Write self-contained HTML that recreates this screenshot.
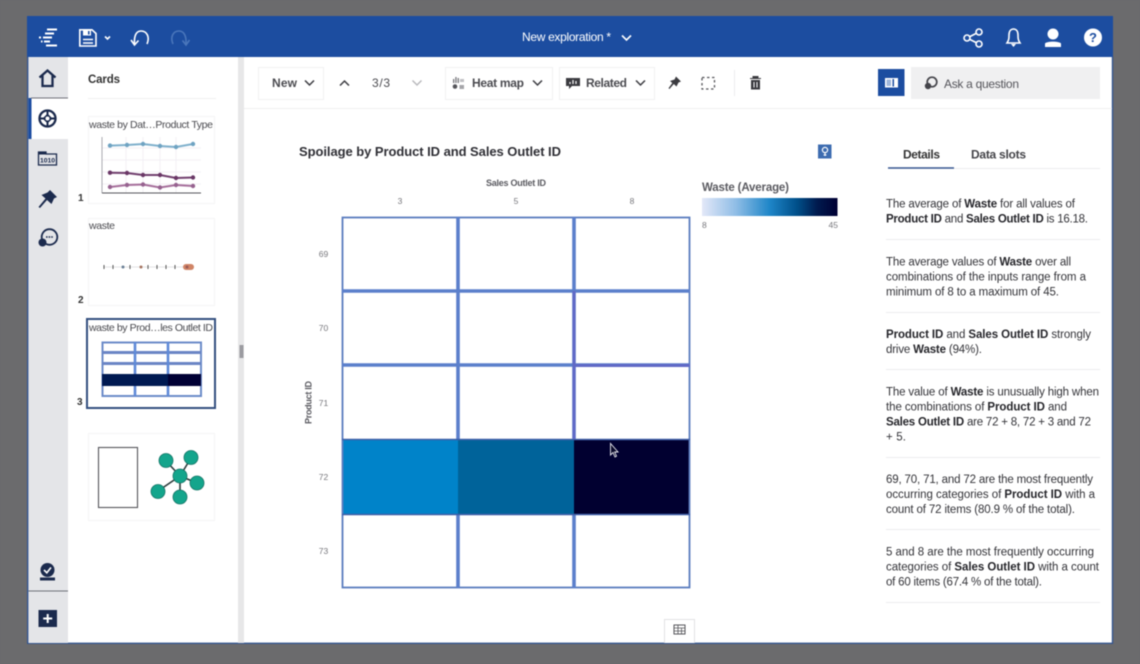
<!DOCTYPE html>
<html><head><meta charset="utf-8"><style>
html,body{margin:0;padding:0;background:#6b6b6d;width:1140px;height:664px;overflow:hidden}
svg{display:block;filter:blur(.4px)}
text{font-family:"Liberation Sans",sans-serif;fill:#2b2b30}
.d{font-size:11.5px;fill:#333338}
.d tspan{font-weight:bold;fill:#26262b}
.b{font-weight:bold}
.ax{font-size:8.5px;fill:#77777c}
.c{font-size:10.5px;fill:#4a4a4f}
.n{font-size:10px;font-weight:bold;fill:#333}
.tb{font-size:12px;font-weight:bold;fill:#4b4b50}
.sep{stroke:#ececee;stroke-width:1}
.ic{fill:none;stroke:#1b2a4d;stroke-width:2.3}
.w{fill:none;stroke:#fff;stroke-width:1.6}
.hl{stroke:#5b7fcb;fill:none}
</style></head><body>
<svg width="1140" height="664" viewBox="0 0 1140 664" xmlns="http://www.w3.org/2000/svg">
<rect width="1140" height="664" fill="#6b6b6d"/>
<rect x="27" y="16" width="1086" height="628" fill="#fff"/>
<rect x="27" y="16" width="1086" height="41" fill="#1c4da0"/>
<path d="M27.700 57V643.300H1112.500V57" fill="none" stroke="#34558f" stroke-width="1.400"/>

<!-- top bar -->
<g class="w">
<path d="M47 29.500H57M45 33.500H54M43 37.500H52M39 37.500H41M44 41.500H50M41 41.500H42.500M46 45.500H57" stroke-width="1.900"/>
<path d="M79.800 29.800H92L96 33.500V46H79.800Z"/><path d="M83 43H93M83 39.500H93"/>
<path d="M105 36.500L107.500 39L110 36.500"/>
<path d="M147 44C150 37 147 31 141 31C136 31 134 36 134.500 44"/><path d="M131 40L134.500 45L138.500 40.500"/>
<g stroke="#4a76bb"><path d="M173 44C170 37 173 31 179 31C184 31 186.500 36 186 44"/><path d="M182.500 40.500L186 45L189.500 40"/></g>
<path d="M622 35.500L626.500 40L631 35.500"/>
</g>
<rect x="83" y="30" width="8" height="5.500" fill="#fff"/><rect x="88" y="31" width="1.600" height="3.500" fill="#1c4da0"/>
<text x="522" y="41" font-size="12" style="fill:#fff" textLength="89">New exploration *</text>
<g class="w">
<circle cx="967" cy="38" r="3"/><circle cx="979" cy="32" r="3"/><circle cx="979" cy="44" r="3"/><path d="M970 36.500L976 33.500M970 39.500L976 42.500"/>
<path d="M1007 43C1009 40 1009 38 1009 35C1009 31 1011 29 1013.500 29C1016 29 1018 31 1018 35C1018 38 1018 40 1020 43Z"/>
</g>
<path d="M1011 44H1016L1013.500 47Z" fill="#fff"/>
<circle cx="1053" cy="34" r="5.500" fill="#fff"/><path d="M1045 47V43.500C1047 41 1059 41 1061 43.500V47Z" fill="#fff"/>
<circle cx="1093" cy="37.500" r="9" fill="#fff"/>
<text x="1093" y="42" text-anchor="middle" font-size="13" class="b" style="fill:#1c4da0">?</text>

<!-- left rail -->
<rect x="28.500" y="57" width="39.500" height="586" fill="#e4e5e8"/>
<rect x="28.500" y="98" width="39.500" height="41" fill="#fff"/>
<rect x="28.500" y="98" width="3" height="41" fill="#1c4da0"/>
<path d="M31 98H68" stroke="#6e7078" stroke-width="1"/>
<path d="M28.500 591H68" stroke="#6e7078" stroke-width="1"/>
<path d="M39.500 77.500L47.500 70.500L55.500 77.500M42.500 75.500V86H52.500V75.500" class="ic"/>
<circle cx="47.500" cy="118.500" r="8" class="ic"/><path d="M47.500 110V115M47.500 122V127M39 118.500H44M51 118.500H56" stroke="#1b2a4d" stroke-width="2"/>
<path d="M47.500 113.500L52.500 118.500L47.500 123.500L42.500 118.500Z" fill="#1b2a4d"/>
<circle cx="47.500" cy="118.500" r="2" fill="#fff"/>
<path d="M38.500 152H46V154H56.500V165H38.500Z" fill="none" stroke="#1b2a4d" stroke-width="1.300"/>
<rect x="38" y="151.500" width="8" height="3" fill="#1b2a4d"/>
<text x="47.500" y="162.500" text-anchor="middle" font-size="6.800" class="b" style="fill:#1b2a4d">1010</text>
<path d="M50 190L57 197L54 198.500L51.500 204L47 200L40 208L38.500 207L45.500 198.500L41.500 195L47.500 192.500Z" fill="#1b2a4d"/>
<circle cx="49.500" cy="237" r="7.800" fill="#e4e5e8" stroke="#1b2a4d" stroke-width="1.800"/>
<circle cx="42.500" cy="242.500" r="4" fill="#1b2a4d"/>
<path d="M46 237H53" stroke="#1b2a4d" stroke-width="1.600" stroke-dasharray="1.600 1"/>
<circle cx="47.500" cy="570" r="7" fill="#1b2a4d"/><path d="M44 570L46.800 572.800L51 567.500" fill="none" stroke="#fff" stroke-width="1.600"/>
<rect x="40" y="577.500" width="15" height="3" fill="#1b2a4d"/>
<rect x="38.500" y="610" width="18.500" height="17" fill="#1b2a4d"/>
<path d="M47.700 614V623M43.200 618.500H52.200" stroke="#fff" stroke-width="2"/>

<!-- cards pane -->
<rect x="238" y="57" width="6" height="586" fill="#e7e7e8"/>
<rect x="239.500" y="345" width="4" height="13" fill="#9b9ba0"/>
<text x="88" y="83" font-size="11.500" class="b" style="fill:#333" textLength="32">Cards</text>
<path d="M88 98.500H216" stroke="#efeff0"/>

<rect x="88.500" y="116.500" width="126" height="87" fill="#fff" stroke="#f4f4f5"/>
<text x="89" y="128" class="c" textLength="124">waste by Dat…Product Type</text>
<path d="M102 148H201M102 160H201M102 172H201M102 184H201M126 137V193M143 137V193M160 137V193M176 137V193" stroke="#f3f0f5" stroke-width="1"/>
<path d="M102 137V193" stroke="#aaaab0" stroke-width="1"/><path d="M102 193H201" stroke="#55555a" stroke-width="1"/>
<g fill="none" stroke-width="2">
<path d="M110 145.600L127 145L143 144L160 146L176 147L193 144" stroke="#7fb0cc"/>
<path d="M110 172.700L127 173L143 175L160 175L176 178L193 177.500" stroke="#713f6e"/>
<path d="M110 187L127 185L143 184.500L160 187.500L176 185L193 186" stroke="#a66f9b"/>
</g>
<g fill="#6fa3c2"><circle cx="110" cy="145.600" r="2.200"/><circle cx="127" cy="145" r="2.200"/><circle cx="143" cy="144" r="2.200"/><circle cx="160" cy="146" r="2.200"/><circle cx="176" cy="147" r="2.200"/><circle cx="193" cy="144" r="2.200"/></g>
<g fill="#6a3766"><circle cx="110" cy="172.700" r="2.200"/><circle cx="127" cy="173" r="2.200"/><circle cx="143" cy="175" r="2.200"/><circle cx="160" cy="175" r="2.200"/><circle cx="176" cy="178" r="2.200"/><circle cx="193" cy="177.500" r="2.200"/></g>
<g fill="#96628f"><circle cx="110" cy="187" r="2.200"/><circle cx="127" cy="185" r="2.200"/><circle cx="143" cy="184.500" r="2.200"/><circle cx="160" cy="187.500" r="2.200"/><circle cx="176" cy="185" r="2.200"/><circle cx="193" cy="186" r="2.200"/></g>
<text x="78" y="201" class="n">1</text>

<rect x="88.500" y="218.500" width="126" height="87" fill="#fff" stroke="#f4f4f5"/>
<text x="89" y="229" class="c" textLength="26">waste</text>
<path d="M104 267H190" stroke="#c9c9cc" stroke-width=".6"/>
<path d="M104 265V269M113 265V269M130 265V269M148 265V269M157 265V269M166 265V269M175 265V269" stroke="#555" stroke-width="1"/>
<circle cx="123" cy="267" r="1.500" fill="#6a7f95"/><circle cx="141" cy="267" r="1.500" fill="#a5735f"/>
<rect x="183" y="264" width="11" height="6" rx="3" fill="#d08466"/><circle cx="187" cy="267" r="1.500" fill="#9a5b55"/>
<text x="78" y="303" class="n">2</text>

<rect x="87" y="319" width="128" height="89" fill="#fff" stroke="#34507f" stroke-width="2"/>
<text x="89" y="331" class="c" textLength="124">waste by Prod…les Outlet ID</text>
<rect x="102.500" y="342.500" width="98.500" height="53.500" fill="#fff" stroke="#6c8bc8" stroke-width="2"/>
<path d="M102 352.500H201M102 363.500H201" stroke="#6a85c5" stroke-width="3"/>
<rect x="102" y="374" width="99" height="12" fill="#001a52"/><rect x="168" y="374" width="33" height="12" fill="#000034"/>
<path d="M135 342V374M168 342V374M135 386V396M168 386V396" stroke="#5f8ad8" stroke-width="2.600"/>
<text x="77" y="405" class="n">3</text>

<rect x="88.500" y="433.500" width="126" height="87" fill="#fff" stroke="#f4f4f5"/>
<rect x="98.500" y="447.500" width="39" height="60" fill="#fff" stroke="#55555a" stroke-width="1.100"/>
<path d="M180 476L166 461M180 476L191 458M180 476L197 483M180 476L180 497M180 476L158 491" stroke="#2b3b3b" stroke-width="1.600"/>
<g fill="#14a58c" stroke="#147566" stroke-width=".8"><circle cx="180" cy="476" r="7"/><circle cx="166" cy="460.500" r="7"/><circle cx="191" cy="457.500" r="7"/><circle cx="197" cy="483" r="7"/><circle cx="180" cy="497" r="7"/><circle cx="158" cy="491.500" r="7"/></g>

<!-- toolbar -->
<path d="M244 108.500H1112" stroke="#efeff0"/>
<rect x="258.500" y="67.500" width="65" height="32" fill="#fff" stroke="#f1f1f2"/>
<rect x="445.500" y="67.500" width="107" height="32" fill="#fff" stroke="#f1f1f2"/>
<rect x="559.500" y="67.500" width="95" height="32" fill="#fff" stroke="#f1f1f2"/>
<text x="272" y="87" class="tb" textLength="25">New</text>
<text x="372" y="87" font-size="12" style="fill:#4b4b50" textLength="18">3/3</text>
<text x="472" y="87" class="tb" textLength="52">Heat map</text>
<text x="586" y="87" class="tb" textLength="41">Related</text>
<g fill="none" stroke="#3b3b40" stroke-width="1.500">
<path d="M305 80.500L309.500 85L314 80.500"/><path d="M340 85.500L344.500 81L349 85.500"/>
<path d="M533 80.500L537.500 85L542 80.500"/><path d="M636 80.500L640.500 85L645 80.500"/>
<path d="M412.500 80.500L417 85L421.500 80.500" stroke="#b9b9bd"/>
</g>
<g fill="#77777c"><rect x="453" y="79" width="1.300" height="4"/><rect x="455.300" y="77" width="1.300" height="6"/><rect x="457.600" y="78" width="1.300" height="5"/><circle cx="455" cy="86.500" r="2.300" fill="#55555a"/><rect x="459.500" y="85" width="4.500" height="4" fill="#a5a5a9"/><rect x="460" y="79" width="4" height="3" fill="#c0c0c4"/></g>
<path d="M566 78H580V86H572L569 89V86H566Z" fill="#3b3b40"/><path d="M570 84V82M573 84V80M576 84V81" stroke="#fff" stroke-width="1.200"/>
<path d="M676 76.500L681 81.500L678.500 82.500L676.500 86.500L673.800 84L669.500 89L668.500 88.300L672.300 83L670 81L674.500 79.500Z" fill="#3b3b40"/>
<rect x="702" y="77.500" width="12.500" height="11.500" fill="none" stroke="#55555a" stroke-width="1.300" stroke-dasharray="2.500 2.500"/>
<path d="M734.500 70V96" stroke="#ececee"/>
<path d="M750 78.500H761M753 78.500V76.500H758V78.500M751.500 80.500H759.500V89H751.500Z" fill="#3b3b40" stroke="#3b3b40" stroke-width="1"/>
<path d="M754 82V87.500M757 82V87.500" stroke="#fff" stroke-width="1"/>

<rect x="878" y="69" width="26.500" height="27" fill="#1c4da0"/>
<rect x="885" y="78" width="13" height="9.500" fill="#fff"/><rect x="892.500" y="79" width="1.500" height="7.500" fill="#1c4da0"/><rect x="886.500" y="79.500" width="4.500" height="6.500" fill="#9fb6db"/>
<rect x="911" y="67" width="189" height="32" fill="#f0f0f1"/>
<circle cx="932" cy="82" r="4.800" fill="none" stroke="#44444a" stroke-width="1.700"/><circle cx="928" cy="86" r="3.200" fill="#44444a"/>
<text x="944" y="88" font-size="12" style="fill:#55555b" textLength="75">Ask a question</text>

<!-- chart -->
<text x="299" y="156" font-size="13" class="b" style="fill:#2f2f35" textLength="262">Spoilage by Product ID and Sales Outlet ID</text>
<rect x="818" y="144.500" width="13.500" height="14" fill="#3d6cb0"/>
<circle cx="825" cy="150" r="2.600" fill="none" stroke="#fff" stroke-width="1.200"/><path d="M825 153V156M823.500 155H826.500" stroke="#fff" stroke-width="1"/>
<text x="486" y="186" font-size="9" class="b" style="fill:#5a5a60" textLength="60">Sales Outlet ID</text>
<text x="400" y="204" class="ax" text-anchor="middle">3</text>
<text x="516" y="204" class="ax" text-anchor="middle">5</text>
<text x="632" y="204" class="ax" text-anchor="middle">8</text>
<text x="702" y="191" font-size="11.500" class="b" style="fill:#5a5a60" textLength="87">Waste (Average)</text>
<defs><linearGradient id="g" x1="0" x2="1" y1="0" y2="0">
<stop offset="0" stop-color="#e3e8f8"/><stop offset=".25" stop-color="#8fbde6"/><stop offset=".5" stop-color="#1e86c8"/><stop offset=".7" stop-color="#00508a"/><stop offset=".85" stop-color="#001a4e"/><stop offset="1" stop-color="#000033"/>
</linearGradient></defs>
<rect x="702" y="198" width="135.500" height="18" fill="url(#g)"/>
<text x="702" y="228" class="ax">8</text>
<text x="838" y="228" class="ax" text-anchor="end">45</text>
<text x="323.500" y="257" class="ax" text-anchor="middle">69</text>
<text x="323.500" y="331" class="ax" text-anchor="middle">70</text>
<text x="323.500" y="406" class="ax" text-anchor="middle">71</text>
<text x="323.500" y="480" class="ax" text-anchor="middle">72</text>
<text x="323.500" y="554" class="ax" text-anchor="middle">73</text>
<text transform="translate(311.500,424) rotate(-90)" font-size="9" class="b" style="fill:#5a5a60" textLength="43">Product ID</text>

<rect x="342" y="439" width="116" height="75" fill="#0083c9"/>
<rect x="458" y="439" width="116" height="75" fill="#00639a"/>
<rect x="574" y="439" width="116" height="75" fill="#010030"/>
<rect x="342.500" y="217.500" width="347" height="370" fill="none" stroke="#5a7cbf" stroke-width="1.800"/>
<path d="M458 217V439M574 217V439M458 514V588M574 514V588" class="hl" stroke-width="3.600"/>
<path d="M342 291H690M342 365H690" class="hl" stroke-width="3.400"/>
<path d="M342 439.500H690" stroke="#3f5fa8" stroke-width="1.500"/>
<path d="M342 514.500H690" stroke="#3f5fa8" stroke-width="1.500"/>
<path d="M574 365.500H690M574 291V439" stroke="#6069c6" stroke-width="3" fill="none"/>
<path d="M610.500 443.500V455L613 452.500L615 457L616.500 456.200L614.700 452H618Z" fill="#0a0a2a" stroke="#e8e8ee" stroke-width=".9"/>

<path d="M664.500 643V619.500H694.500V643" fill="#fff" stroke="#e2e2e4"/>
<rect x="674" y="625" width="11" height="9" fill="none" stroke="#55555a"/><path d="M674 628H685M674 631H685M678 625V634M681.500 628V634" stroke="#55555a" stroke-width=".8"/>

<!-- details -->
<text x="903" y="158.500" font-size="12" class="b" style="fill:#333" textLength="37">Details</text>
<text x="971" y="158.500" font-size="12" class="b" style="fill:#444449" textLength="55">Data slots</text>
<path d="M954 168.500H1100" stroke="#ececee"/>
<path d="M888 168H954" stroke="#34558f" stroke-width="1.600"/>

<text x="886" y="207.500" class="d" textLength="189">The average of <tspan>Waste</tspan> for all values of</text>
<text x="886" y="222.500" class="d" textLength="202"><tspan>Product ID</tspan> and <tspan>Sales Outlet ID</tspan> is 16.18.</text>
<path class="sep" d="M886 239.500H1100"/>
<text x="886" y="265.500" class="d" textLength="185">The average values of <tspan>Waste</tspan> over all</text>
<text x="886" y="280.500" class="d" textLength="200">combinations of the inputs range from a</text>
<text x="886" y="295.500" class="d" textLength="173">minimum of 8 to a maximum of 45.</text>
<path class="sep" d="M886 312.500H1100"/>
<text x="886" y="338" class="d" textLength="205"><tspan>Product ID</tspan> and <tspan>Sales Outlet ID</tspan> strongly</text>
<text x="886" y="353" class="d" textLength="96">drive <tspan>Waste</tspan> (94%).</text>
<path class="sep" d="M886 369.500H1100"/>
<text x="886" y="395.500" class="d" textLength="213">The value of <tspan>Waste</tspan> is unusually high when</text>
<text x="886" y="410.500" class="d" textLength="181">the combinations of <tspan>Product ID</tspan> and</text>
<text x="886" y="425.500" class="d" textLength="205"><tspan>Sales Outlet ID</tspan> are 72 + 8, 72 + 3 and 72</text>
<text x="886" y="440.500" class="d" textLength="20">+ 5.</text>
<path class="sep" d="M886 457.500H1100"/>
<text x="886" y="483" class="d" textLength="207">69, 70, 71, and 72 are the most frequently</text>
<text x="886" y="498" class="d" textLength="209">occurring categories of <tspan>Product ID</tspan> with a</text>
<text x="886" y="513" class="d" textLength="189">count of 72 items (80.9 % of the total).</text>
<path class="sep" d="M886 529.500H1100"/>
<text x="886" y="555.500" class="d" textLength="208">5 and 8 are the most frequently occurring</text>
<text x="886" y="570.500" class="d" textLength="213">categories of <tspan>Sales Outlet ID</tspan> with a count</text>
<text x="886" y="585.500" class="d" textLength="156">of 60 items (67.4 % of the total).</text>
<path class="sep" d="M886 602.500H1100"/>
</svg>
</body></html>
